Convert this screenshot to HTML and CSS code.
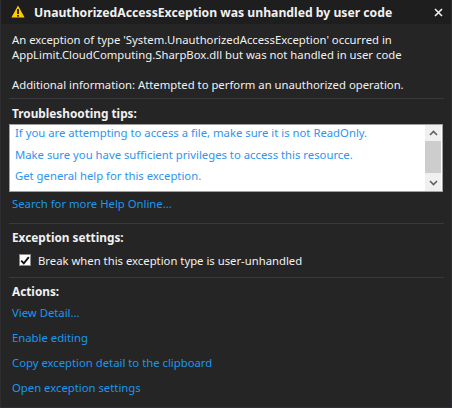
FILE: index.html
```html
<!DOCTYPE html>
<html>
<head>
<meta charset="utf-8">
<link rel="stylesheet" href="styles.css">
</head>
<body>
<div class="dialog">
  <div class="header">
    <svg class="warn" width="14" height="13" viewBox="0 0 14 13">
      <path d="M7 0.5 L13.6 12.5 L0.4 12.5 Z" fill="#ffcc00"/>
      <rect x="6.1" y="4" width="1.8" height="5" fill="#1a1a1a"/>
      <rect x="6.1" y="10" width="1.8" height="1.7" fill="#1a1a1a"/>
    </svg>
    <span class="title">UnauthorizedAccessException was unhandled by user code</span>
    <svg class="close" width="9" height="9" viewBox="0 0 9 9">
      <path d="M1 1 L8 8 M8 1 L1 8" stroke="#f1f1f1" stroke-width="1.6"/>
    </svg>
  </div>
  <div class="body">
    <p class="message">An exception of type 'System.UnauthorizedAccessException' occurred in<br>AppLimit.CloudComputing.SharpBox.dll but was not handled in user code</p>
    <p class="additional">Additional information: Attempted to perform an unauthorized operation.</p>
    <div class="sep sep1"></div>
    <div class="heading h-tips">Troubleshooting tips:</div>
    <div class="tips">
      <div class="tips-list">
        <div class="tip">If you are attempting to access a file, make sure it is not ReadOnly.</div>
        <div class="tip">Make sure you have sufficient privileges to access this resource.</div>
        <div class="tip">Get general help for this exception.</div>
      </div>
      <div class="scrollbar">
        <div class="sb-btn"><svg width="9" height="6" viewBox="0 0 9 6"><path d="M1 5 L4.5 1.5 L8 5" fill="none" stroke="#606060" stroke-width="1.6"/></svg></div>
        <div class="sb-thumb"></div>
        <div class="sb-track"></div>
        <div class="sb-btn"><svg width="9" height="6" viewBox="0 0 9 6"><path d="M1 1 L4.5 4.5 L8 1" fill="none" stroke="#606060" stroke-width="1.6"/></svg></div>
      </div>
    </div>
    <div class="link search">Search for more Help Online...</div>
    <div class="sep sep2"></div>
    <div class="heading h-settings">Exception settings:</div>
    <div class="check-row">
      <span class="checkbox"><svg width="10" height="9" viewBox="0 0 10 9"><path d="M1.2 4.6 L3.8 7.3 L8.8 1.2" fill="none" stroke="#111" stroke-width="1.9"/></svg></span>
      <span class="check-label">Break when this exception type is user-unhandled</span>
    </div>
    <div class="sep sep3"></div>
    <div class="heading h-actions">Actions:</div>
    <div class="actions">
      <div class="link">View Detail...</div>
      <div class="link">Enable editing</div>
      <div class="link">Copy exception detail to the clipboard</div>
      <div class="link">Open exception settings</div>
    </div>
  </div>
</div>
</body>
</html>
```
FILE: styles.css
```css
* { box-sizing: border-box; }
html, body { margin: 0; padding: 0; background: #252526; }
body { font-family: "Noto Sans", "Open Sans", sans-serif; font-size: 11.3px; color: #f1f1f1; }
.dialog {
  width: 452px; height: 408px;
  background: #252526;
  border: 1px solid #2f2f33;
  border-top: none;
  display: flex; flex-direction: column;
}
.header {
  height: 24px; background: #1e1e1f;
  display: flex; align-items: center;
  padding: 0 8px 0 10px;
}
.warn { flex: none; margin-top: -1px; }
.title { font-weight: bold; font-size: 12.2px; margin-left: 9px; flex: 1; white-space: nowrap; }
.close { flex: none; }
.body { padding: 0 0 0 11px; display: flex; flex-direction: column; }
p { margin: 0; }
.message { margin-top: 8px; line-height: 15px; white-space: nowrap; }
.additional { margin-top: 15px; line-height: 15px; white-space: nowrap; }
.sep { height: 1px; background: #38383d; margin-left: -3px; margin-right: 7px; }
.sep1 { margin-top: 6px; }
.heading { font-weight: bold; font-size: 11.8px; line-height: 16px; }
.h-tips { margin-top: 6px; }
.tips {
  margin-top: 3px; margin-left: -3px; margin-right: 8px;
  height: 68px; background: #fff;
  border: 1px solid #a0a0a0;
  display: flex;
}
.tips-list { flex: 1; padding-left: 5px; display: flex; flex-direction: column; gap: 5.5px; }
.tip { color: #2e94f0; line-height: 16px; white-space: nowrap; }
.scrollbar { width: 16px; background: #f0f0f0; display: flex; flex-direction: column; margin-right: 1px; }
.sb-btn { height: 16px; display: flex; align-items: center; justify-content: center; }
.sb-thumb { height: 32px; background: #cdcdcd; }
.sb-track { flex: 1; }
.link { color: #1c97ea; line-height: 16px; white-space: nowrap; }
.search { margin-top: 4px; }
.sep2 { margin-top: 11px; }
.h-settings { margin-top: 5px; }
.check-row { margin-top: 6px; height: 18px; display: flex; align-items: center; padding-left: 7px; }
.checkbox {
  width: 12px; height: 12px; background: #fff; border: 1px solid #8a8a8a;
  display: flex; align-items: center; justify-content: center;
}
.check-label { margin-left: 7px; }
.sep3 { margin-top: 8px; }
.h-actions { margin-top: 5px; }
.actions { margin-top: 6px; display: flex; flex-direction: column; gap: 9px; }
```
